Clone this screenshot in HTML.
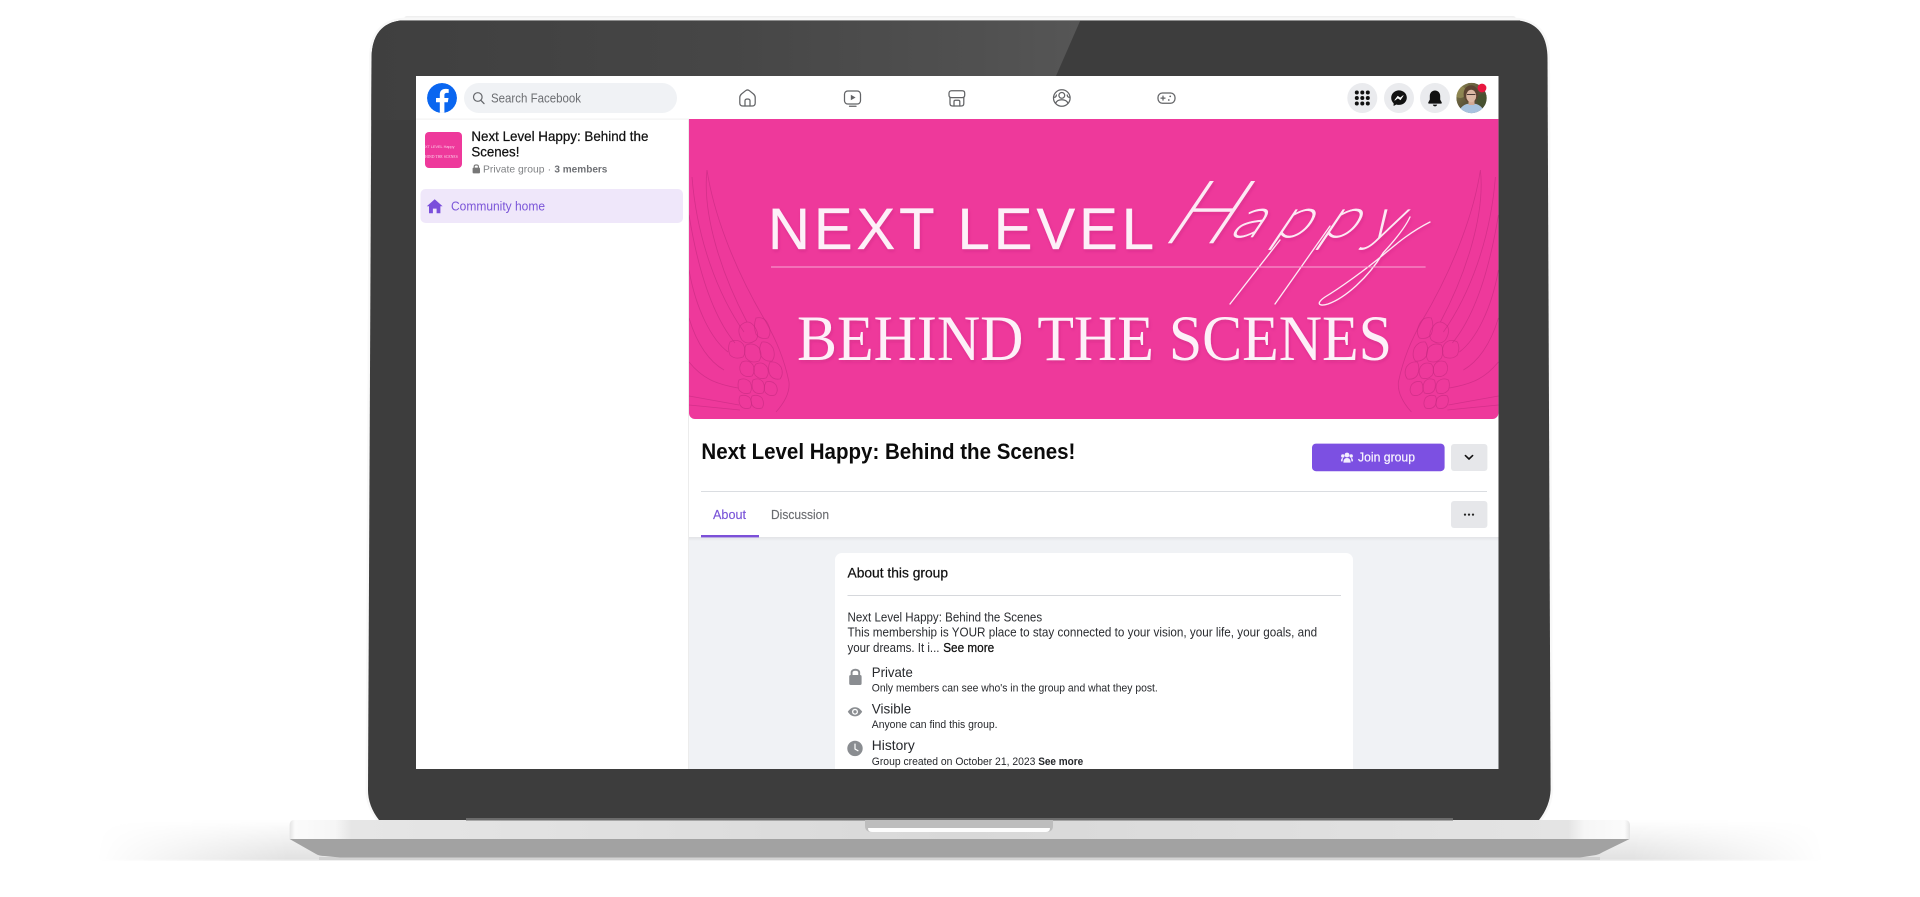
<!DOCTYPE html>
<html lang="en">
<head>
<meta charset="utf-8">
<title>Next Level Happy: Behind the Scenes!</title>
<style>
html,body{margin:0;padding:0;background:#fff;width:1920px;height:897px;overflow:hidden}
svg{display:block;position:absolute;left:0;top:0}
text{font-family:"Liberation Sans",sans-serif}
.ic{fill:none;stroke:#626366;stroke-width:1.25;stroke-linecap:round;stroke-linejoin:round}
.w{fill:none;stroke:#c42a80;stroke-width:.8;opacity:.62}
</style>
</head>
<body>
<svg width="1920" height="897" viewBox="0 0 1920 897" xmlns="http://www.w3.org/2000/svg">
<defs>
<linearGradient id="lid" x1="0" x2="1" y1="0" y2="0">
<stop offset="0" stop-color="#3f3f3f"/><stop offset=".5" stop-color="#464646"/><stop offset=".85" stop-color="#505050"/><stop offset="1" stop-color="#565656"/>
</linearGradient>
<linearGradient id="base" x1="0" x2="1" y1="0" y2="0">
<stop offset="0" stop-color="#e4e4e4"/><stop offset=".004" stop-color="#fbfbfb"/><stop offset=".034" stop-color="#f6f6f6"/><stop offset=".046" stop-color="#e6e6e6"/><stop offset=".5" stop-color="#d8d8d8"/><stop offset=".954" stop-color="#e4e4e4"/><stop offset=".966" stop-color="#f6f6f6"/><stop offset=".996" stop-color="#fbfbfb"/><stop offset="1" stop-color="#e4e4e4"/>
</linearGradient>
<linearGradient id="shV" x1="0" x2="0" y1="0" y2="1">
<stop offset="0" stop-color="#fff"/><stop offset=".75" stop-color="#e8e8e8"/><stop offset=".95" stop-color="#e2e2e2"/><stop offset="1" stop-color="#f4f4f4"/>
</linearGradient>
<linearGradient id="shH" x1="0" x2="1" y1="0" y2="0">
<stop offset=".05" stop-color="#000"/><stop offset=".15" stop-color="#fff"/><stop offset=".85" stop-color="#fff"/><stop offset=".95" stop-color="#000"/>
</linearGradient>
<mask id="shm" maskUnits="userSpaceOnUse" x="0" y="815" width="1920" height="50"><rect x="0" y="815" width="1920" height="50" fill="url(#shH)"/></mask>
<linearGradient id="tabsh" x1="0" x2="0" y1="0" y2="1">
<stop offset="0" stop-color="#e2e3e6"/><stop offset="1" stop-color="#f0f2f5"/>
</linearGradient>
<linearGradient id="av" x1="0" x2="1" y1="0" y2="1">
<stop offset="0" stop-color="#8a8250"/><stop offset=".5" stop-color="#5a5238"/><stop offset="1" stop-color="#3e4a30"/>
</linearGradient>
<filter id="ds" x="-5%" y="-20%" width="110%" height="150%"><feDropShadow dx="1" dy="2" stdDeviation="1.5" flood-color="#a81a68" flood-opacity=".28"/></filter>
<clipPath id="bannerClip"><path d="M689 119H1498.4V413a6 6 0 0 1-6 6H695a6 6 0 0 1-6-6Z"/></clipPath>
<clipPath id="screenClip"><rect x="416" y="76" width="1082.5" height="693"/></clipPath>
<clipPath id="fbClip"><circle cx="442" cy="98" r="15"/></clipPath>
<clipPath id="avClip"><circle cx="1471.5" cy="98" r="15.2"/></clipPath>
<clipPath id="thumbClip"><rect x="425" y="132" width="37" height="36" rx="4"/></clipPath>
<g id="wing">
<path class="w" d="M707 170C702 215 722 275 747 322M707 170C713 210 732 265 766 322"/>
<path class="w" d="M692 177C697 240 718 295 744 332"/>
<path class="w" d="M689 215C698 270 712 315 735 343"/>
<path class="w" d="M689 270C696 310 712 340 728 352"/>
<path class="w" d="M689 318C697 345 710 362 724 370"/>
<path class="w" d="M689 362C702 378 715 384 738 388"/>
<path class="w" d="M689 396L739 405M689 405L740 410"/>
<path class="w" d="M766 322C776 340 784 358 789 382C790 392 785 402 776 412"/>
<path class="w" d="M740 326q8-8 14 0q6 8 2 14q-8 6-14 0q-5-8-2-14Z"/>
<path class="w" d="M756 318q8-2 12 6q4 8 0 14q-8 2-12-4q-3-8 0-16Z"/>
<path class="w" d="M730 342q8-4 13 2q4 7 0 13q-8 3-13-2q-3-7 0-13Z"/>
<path class="w" d="M746 345q8-3 13 3q4 7 0 13q-8 3-13-3q-3-7 0-13Z"/>
<path class="w" d="M762 342q7-1 11 6q3 8-1 13q-7 1-11-5q-3-8 1-14Z"/>
<path class="w" d="M742 362q7-3 11 3q3 6-1 11q-7 2-11-3q-3-6 1-11Z"/>
<path class="w" d="M756 364q7-3 11 3q3 6-1 11q-7 2-11-3q-3-6 1-11Z"/>
<path class="w" d="M770 362q7-1 11 5q3 7-1 12q-7 1-10-4q-3-7 0-13Z"/>
<path class="w" d="M739 380q6-3 11 2q3 6 0 11q-7 2-11-3q-2-5 0-10Z"/>
<path class="w" d="M753 380q6-3 10 2q3 6 0 11q-7 2-10-3q-2-5 0-10Z"/>
<path class="w" d="M766 382q6-2 10 3q3 6-1 10q-6 2-10-3q-2-5 1-10Z"/>
<path class="w" d="M740 396q6-2 10 2q3 6 0 10q-7 2-10-3q-2-5 0-9Z"/>
<path class="w" d="M752 396q6-2 10 2q3 6 0 10q-7 2-10-3q-2-5 0-9Z"/>
</g>
</defs>

<!-- ground shadow -->
<rect x="0" y="820" width="1920" height="41" fill="url(#shV)" mask="url(#shm)"/>
<rect x="319" y="857" width="1281" height="3" fill="#d2d2d2"/>

<!-- lid -->
<rect x="404" y="16" width="1112" height="6" rx="3" fill="#efefef"/>
<path d="M408 20H1511Q1547 20 1547.5 58L1550.6 790Q1550 806 1539 820H379Q368 806 368 790L371.5 58Q372 20 408 20Z" fill="none" stroke="#f8f8f8" stroke-width="5"/>
<path d="M408 20H1511Q1547 20 1547.5 58L1550.6 790Q1550 806 1539 820H379Q368 806 368 790L371.5 58Q372 20 408 20Z" fill="#3d3d3d"/>
<path d="M408 20H1080.5L1056 76H416V120H371.3L371.5 58Q372 20 408 20Z" fill="url(#lid)"/>
<rect x="400" y="20" width="1120" height="1" fill="#8f8f8f"/>

<!-- base -->
<path d="M289.6 839L316 854Q319 856 325 856L340 857.5H1580L1596 855Q1600 854 1603 852L1629.6 839Z" fill="#a2a2a2"/>
<path d="M294 820H1625Q1630 820 1630 826V839H289.6V826Q289.6 820 294 820Z" fill="url(#base)"/>
<rect x="466" y="818" width="987" height="2.5" fill="#6c6c6c"/>
<path d="M865 820H1053V826Q1053 832 1046 832H872Q865 832 865 826Z" fill="#bdbdbd"/>
<path d="M868 828H1050Q1050 832 1046 832H872Q868 832 868 828Z" fill="#fdfdfd"/>

<!-- screen -->
<g clip-path="url(#screenClip)">
<rect x="416" y="76" width="1083" height="693" fill="#fff"/>
<rect x="689" y="419" width="810" height="350" fill="#fff"/>
<rect x="689" y="537" width="810" height="232" fill="#f0f2f5"/>
<rect x="689" y="537" width="810" height="4" fill="url(#tabsh)"/>
<rect x="688" y="119" width="1" height="650" fill="#ececec"/>

<!-- banner -->
<g clip-path="url(#bannerClip)">
<rect x="689" y="119" width="810" height="300" fill="#ee399b"/>
<use href="#wing"/>
<use href="#wing" transform="translate(2187.4 0) scale(-1 1)"/>
<g filter="url(#ds)">
<text x="768" y="249" font-size="58" fill="#fdf0f8" stroke="#fdf0f8" stroke-width=".3" textLength="386" lengthAdjust="spacing">NEXT LEVEL</text>
<text x="797" y="360" font-size="65" fill="#fdf0f8" textLength="595" lengthAdjust="spacingAndGlyphs" style="font-family:'Liberation Serif',serif">BEHIND THE SCENES</text>
<text transform="translate(1158 243) skewX(-34) scale(1.1 1)" font-size="85" fill="#fdeaf5" stroke="#fdeaf5" stroke-width=".5" style="font-family:'Noto Sans CJK JP',sans-serif;font-weight:100"><tspan>H</tspan><tspan font-size="52" dy="-6" letter-spacing="12">appy</tspan></text>
<g fill="none" stroke="#fdeaf5" stroke-width="1.3" stroke-linecap="round">
<path d="M1280 240L1230 304"/>
<path d="M1330 226L1275 304"/>
<path d="M1430 222C1410 232 1395 245 1383 255C1365 270 1340 288 1325 297C1316 303 1318 307 1328 304C1345 298 1368 278 1383 253C1395 240 1405 228 1410 217"/>
</g>
</g>
<rect x="771" y="266.5" width="654.6" height="1" fill="#f8a8d4"/>
</g>

<!-- nav -->
<rect x="416" y="76" width="1083" height="43" fill="#fff"/>
<rect x="416" y="118.6" width="273" height="1" fill="#f0f0f0"/>
<g clip-path="url(#fbClip)">
<circle cx="442" cy="98" r="15" fill="#0a66f0"/>
<path transform="translate(427 83)" d="M20.8 19.3l.7-4.3h-4.1v-2.8c0-1.2.6-2.3 2.4-2.3h1.9V6.2s-1.7-.3-3.3-.3c-3.4 0-5.6 2-5.6 5.8V15H9v4.3h3.8V30h4.6V19.3z" fill="#fff"/>
</g>
<rect x="464" y="83" width="213" height="30" rx="15" fill="#f0f2f5"/>
<circle cx="477.8" cy="97" r="4.3" fill="none" stroke="#65676b" stroke-width="1.2"/>
<path d="M481 100.4L484 103.6" stroke="#65676b" stroke-width="1.3" stroke-linecap="round"/>
<text x="491" y="102.4" font-size="12.5" fill="#6b6d71" textLength="90" lengthAdjust="spacingAndGlyphs">Search Facebook</text>

<path class="ic" d="M739.8 97.5C739.8 96 740.4 95 741.5 94L745.6 90.7C746.7 89.8 748.3 89.8 749.4 90.7L753.5 94C754.6 95 755.2 96 755.2 97.5V103C755.2 105 754 106 752.3 106H742.7C741 106 739.8 105 739.8 103Z"/>
<path class="ic" d="M745 106V100.8C745 99.6 745.8 99 747.5 99C749.2 99 750 99.6 750 100.8V106"/>

<rect class="ic" x="844.5" y="91" width="16" height="13" rx="3.2"/>
<path d="M850.8 94.8L855.6 97.5L850.8 100.2Z" fill="#626366"/>
<path class="ic" d="M849.5 106.2H856"/>

<path class="ic" d="M951.5 90.8H962.3C963.8 90.8 964.7 91.8 964.7 93.2V95.2C964.7 96.8 963.5 97.6 962 97.6H951.8C950.2 97.6 949 96.8 949 95.2V93.2C949 91.8 950 90.8 951.5 90.8Z"/>
<path class="ic" d="M950 97.6V103.4C950 105 951 106 952.5 106H961.3C962.8 106 963.8 105 963.8 103.4V97.6"/>
<path class="ic" d="M954 106V101.6C954 100.8 954.6 100.2 955.4 100.2H958.4C959.2 100.2 959.8 100.8 959.8 101.6V106"/>

<circle class="ic" cx="1061.8" cy="98" r="8.3"/>
<circle class="ic" cx="1061.8" cy="95.4" r="2.9"/>
<path class="ic" d="M1055.6 103.4C1056.6 100.8 1059 99.8 1061.8 99.8C1064.6 99.8 1067 100.8 1068 103.4"/>
<path class="ic" d="M1053.8 97.2C1055.4 97.6 1056.2 96.6 1056.4 95M1069.8 97.2C1068.2 97.6 1067.4 96.6 1067.2 95"/>

<rect class="ic" x="1158" y="93" width="17" height="10.2" rx="4.4"/>
<path class="ic" d="M1161 98.1H1165M1163 96.1V100.1"/>
<circle cx="1170.2" cy="96.4" r=".9" fill="#626366"/><circle cx="1168.8" cy="100" r=".9" fill="#626366"/>

<circle cx="1362.3" cy="98" r="15" fill="#eaebee"/>
<g fill="#111">
<circle cx="1356.8" cy="92.5" r="2"/><circle cx="1362.3" cy="92.5" r="2"/><circle cx="1367.8" cy="92.5" r="2"/>
<circle cx="1356.8" cy="98" r="2"/><circle cx="1362.3" cy="98" r="2"/><circle cx="1367.8" cy="98" r="2"/>
<circle cx="1356.8" cy="103.5" r="2"/><circle cx="1362.3" cy="103.5" r="2"/><circle cx="1367.8" cy="103.5" r="2"/>
</g>
<circle cx="1399" cy="98" r="15" fill="#eaebee"/>
<path d="M1399 90.4C1394.6 90.4 1391.2 93.6 1391.2 97.8C1391.2 100 1392.1 101.9 1393.6 103.2V106L1396.3 104.5C1397.1 104.8 1398 104.9 1399 104.9C1403.4 104.9 1406.8 101.8 1406.8 97.6C1406.8 93.6 1403.4 90.4 1399 90.4Z" fill="#111"/>
<path d="M1394.8 100.2L1397.8 96.2L1400.2 98L1403.2 95.6L1400.4 99.8L1397.9 98Z" fill="#fff" stroke="#fff" stroke-width=".6" stroke-linejoin="round"/>
<circle cx="1435" cy="98" r="15" fill="#eaebee"/>
<path d="M1435 90.5C1431.8 90.5 1429.8 93 1429.8 96V99.6L1428.3 102.4C1428 103 1428.3 103.6 1429 103.6H1441C1441.7 103.6 1442 103 1441.7 102.4L1440.2 99.6V96C1440.2 93 1438.2 90.5 1435 90.5Z" fill="#111"/>
<path d="M1432.8 104.6C1433.2 105.8 1434 106.4 1435 106.4C1436 106.4 1436.8 105.8 1437.2 104.6Z" fill="#111"/>

<g clip-path="url(#avClip)">
<circle cx="1471.5" cy="98" r="15.2" fill="url(#av)"/>
<circle cx="1460" cy="92" r="6" fill="#9a9258" opacity=".7"/>
<circle cx="1483" cy="100" r="6" fill="#46522f" opacity=".8"/>
<ellipse cx="1471" cy="94" rx="7.4" ry="8.8" fill="#5c4432"/>
<path d="M1458 116C1459 107 1464 103.5 1471.5 103.5C1479 103.5 1484 107 1485 116Z" fill="#a8c2de"/>
<rect x="1468.5" y="99" width="6" height="6" fill="#d3a994"/>
<ellipse cx="1471.2" cy="96" rx="5" ry="6.2" fill="#dcb8a4"/>
<path d="M1467 94.5H1475.4" stroke="#4a3a36" stroke-width="1"/>
</g>
<circle cx="1482" cy="88" r="4.4" fill="#e8173f"/>

<!-- sidebar -->
<g clip-path="url(#thumbClip)">
<rect x="425" y="132" width="37" height="36" fill="#ee399b"/>
<text x="425" y="148" font-size="3.8" fill="#fbd0e8">XT LEVEL Happy</text>
<text x="425" y="158" font-size="3.8" fill="#fbd0e8" style="font-family:'Liberation Serif',serif">HIND THE SCENES</text>
</g>
<text x="471.4" y="141" font-size="14" fill="#111" stroke="#111" stroke-width=".25" textLength="177" lengthAdjust="spacingAndGlyphs">Next Level Happy: Behind the</text>
<text x="471.4" y="156.4" font-size="14" fill="#111" stroke="#111" stroke-width=".25" textLength="48" lengthAdjust="spacingAndGlyphs">Scenes!</text>
<rect x="472.6" y="167.6" width="7.4" height="5.8" rx="1" fill="#777"/>
<path d="M474.2 168V166.4C474.2 164.4 478.4 164.4 478.4 166.4V168" fill="none" stroke="#777" stroke-width="1.1"/>
<text x="483" y="172.4" font-size="10.5" fill="#808285" textLength="61.5" lengthAdjust="spacingAndGlyphs">Private group</text>
<text x="547.6" y="172.4" font-size="10.5" fill="#808285">·</text>
<text x="554.4" y="172.4" font-size="10.5" font-weight="700" fill="#6f7175" textLength="53" lengthAdjust="spacingAndGlyphs">3 members</text>

<rect x="420.5" y="189" width="262.5" height="34" rx="5" fill="#efe7fa"/>
<path d="M434.7 199.2L442.6 206.2H440.4V213.2H436.6V208.6H432.9V213.2H429V206.2H426.8Z" fill="#7a4fdb"/>
<text x="451" y="210.4" font-size="12.5" fill="#7a55d8" textLength="94" lengthAdjust="spacingAndGlyphs">Community home</text>

<!-- group header -->
<text x="701.4" y="459" font-size="22" font-weight="700" fill="#0b0b0b" textLength="374" lengthAdjust="spacingAndGlyphs">Next Level Happy: Behind the Scenes!</text>
<rect x="1312" y="443.6" width="132.6" height="27.6" rx="4" fill="#7c50e2"/>
<g fill="#f3eefe">
<circle cx="1347" cy="455" r="2.4"/><circle cx="1342.8" cy="456" r="1.7"/><circle cx="1351.2" cy="456" r="1.7"/>
<path d="M1343.4 462.6C1343.4 459.4 1344.8 458 1347 458C1349.2 458 1350.6 459.4 1350.6 462.6Z"/>
<path d="M1341 461.4C1341 459 1341.6 458 1343 458L1342.5 461.4ZM1353 461.4C1353 459 1352.4 458 1351 458L1351.5 461.4Z"/>
</g>
<text x="1358" y="461.7" font-size="12.5" fill="#f8f5ff" stroke="#f8f5ff" stroke-width=".2" textLength="57" lengthAdjust="spacingAndGlyphs">Join group</text>
<rect x="1451" y="444" width="36.4" height="27" rx="3" fill="#e6e7ea"/>
<path d="M1465.4 455.6L1469 459L1472.6 455.6" fill="none" stroke="#111" stroke-width="1.6" stroke-linecap="round" stroke-linejoin="round"/>
<rect x="701" y="491" width="786" height="1" fill="#dadde1"/>
<text x="713" y="519" font-size="12.5" fill="#7a55d8" stroke="#7a55d8" stroke-width=".15" textLength="33" lengthAdjust="spacingAndGlyphs">About</text>
<text x="771" y="519" font-size="12.5" fill="#6b6d71" stroke="#6b6d71" stroke-width=".15" textLength="58" lengthAdjust="spacingAndGlyphs">Discussion</text>
<rect x="701" y="535" width="58" height="2.4" fill="#7c50d8"/>
<rect x="1451" y="501" width="36.4" height="27" rx="3" fill="#e6e7ea"/>
<g fill="#222"><circle cx="1465" cy="514.6" r="1.1"/><circle cx="1469" cy="514.6" r="1.1"/><circle cx="1473" cy="514.6" r="1.1"/></g>

<!-- about card -->
<rect x="835" y="553" width="518" height="240" rx="7" fill="#fff"/>
<text x="847.5" y="577.4" font-size="14" fill="#111" stroke="#111" stroke-width=".25" textLength="100.5" lengthAdjust="spacingAndGlyphs">About this group</text>
<rect x="847.5" y="595" width="493.5" height="1" fill="#d6d8dc"/>
<g font-size="12.5" fill="#2a2c30">
<text x="847.5" y="621.6" textLength="194.6" lengthAdjust="spacingAndGlyphs">Next Level Happy: Behind the Scenes</text>
<text x="847.5" y="636.6" textLength="469.6" lengthAdjust="spacingAndGlyphs">This membership is YOUR place to stay connected to your vision, your life, your goals, and</text>
<text x="847.5" y="651.8" textLength="92" lengthAdjust="spacingAndGlyphs">your dreams. It i...</text>
<text x="943.2" y="651.8" fill="#0f0f0f" stroke="#0f0f0f" stroke-width=".25" textLength="51" lengthAdjust="spacingAndGlyphs">See more</text>
</g>
<g fill="#8a8d91">
<rect x="849.2" y="675" width="12.4" height="10" rx="1.6"/>
<path d="M851.6 675.5V672.6C851.6 668.8 859.2 668.8 859.2 672.6V675.5" fill="none" stroke="#8a8d91" stroke-width="1.9"/>
<path d="M847.8 711.8C850 708.4 852.4 707.2 855 707.2C857.6 707.2 860 708.4 862.2 711.8C860 715.2 857.6 716.4 855 716.4C852.4 716.4 850 715.2 847.8 711.8Z"/>
<circle cx="855" cy="711.8" r="3" fill="#fff"/><circle cx="855" cy="711.8" r="1.7"/>
<circle cx="855" cy="748.4" r="7.7"/>
<path d="M855 743.6V749L858.4 751" fill="none" stroke="#fff" stroke-width="1.2"/>
</g>
<g fill="#26282c">
<text x="871.8" y="677" font-size="14" textLength="41" lengthAdjust="spacingAndGlyphs">Private</text>
<text x="871.8" y="691.4" font-size="11" textLength="286" lengthAdjust="spacingAndGlyphs">Only members can see who's in the group and what they post.</text>
<text x="871.8" y="713.6" font-size="14" textLength="39.4" lengthAdjust="spacingAndGlyphs">Visible</text>
<text x="871.8" y="728.2" font-size="11" textLength="125.7" lengthAdjust="spacingAndGlyphs">Anyone can find this group.</text>
<text x="871.8" y="750.2" font-size="14" textLength="43" lengthAdjust="spacingAndGlyphs">History</text>
<text x="871.8" y="765" font-size="11" textLength="163.6" lengthAdjust="spacingAndGlyphs">Group created on October 21, 2023</text>
<text x="1038.2" y="765" font-size="11" font-weight="700" textLength="45" lengthAdjust="spacingAndGlyphs">See more</text>
</g>
</g>
</svg>
</body>
</html>
